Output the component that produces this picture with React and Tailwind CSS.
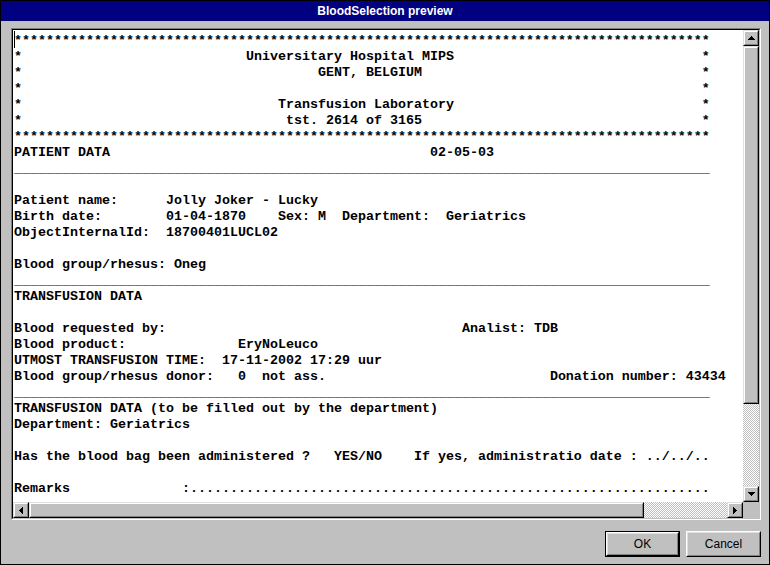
import React from "react";

const W = 87;

// build one fixed-width report line from [column, text] pairs
const line = (...parts) => {
  let s = "";
  for (const [col, txt] of parts) s = s.padEnd(col, " ") + txt;
  return s;
};

const stars = "*".repeat(W);
const rule = "_".repeat(W);

const report = [
  stars,
  line([0, "*"], [29, "Universitary Hospital MIPS"], [86, "*"]),
  line([0, "*"], [38, "GENT, BELGIUM"], [86, "*"]),
  line([0, "*"], [86, "*"]),
  line([0, "*"], [33, "Transfusion Laboratory"], [86, "*"]),
  line([0, "*"], [34, "tst. 2614 of 3165"], [86, "*"]),
  stars,
  line([0, "PATIENT DATA"], [52, "02-05-03"]),
  rule,
  "",
  "Patient name:      Jolly Joker - Lucky",
  "Birth date:        01-04-1870    Sex: M  Department:  Geriatrics",
  "ObjectInternalId:  18700401LUCL02",
  "",
  "Blood group/rhesus: Oneg",
  rule,
  "TRANSFUSION DATA",
  "",
  line([0, "Blood requested by:"], [56, "Analist: TDB"]),
  line([0, "Blood product:"], [28, "EryNoLeuco"]),
  "UTMOST TRANSFUSION TIME:  17-11-2002 17:29 uur",
  line([0, "Blood group/rhesus donor:   0  not ass."], [67, "Donation number: 43434"]),
  rule,
  "TRANSFUSION DATA (to be filled out by the department)",
  "Department: Geriatrics",
  "",
  "Has the blood bag been administered ?   YES/NO    If yes, administratio date : ../../..",
  "",
  line([0, "Remarks"], [21, ":" + ".".repeat(65)]),
];

const Arrow = ({ dir }) => {
  const shapes = {
    up: ["7", "4", "M3 0h1v1h1v1h1v1h1v1H0V3h1V2h1V1h1z"],
    down: ["7", "4", "M0 0h7v1H6v1H5v1H4v1H3V3H2V2H1V1H0z"],
    left: ["4", "7", "M3 0h1v7H3V6H2V5H1V4H0V3h1V2h1V1h1z"],
    right: ["4", "7", "M0 0h1v1h1v1h1v1h1v1H3v1H2v1H1v1H0z"],
  };
  const [w, h, d] = shapes[dir];
  return (
    <svg width={w} height={h} viewBox={`0 0 ${w} ${h}`} shapeRendering="crispEdges">
      <path d={d} fill="#000" />
    </svg>
  );
};

// raised 3D block used for scroll buttons and thumbs
const Raised = ({ className, children }) => (
  <div className={`border border-t-[#dfdfdf] border-l-[#dfdfdf] border-b-black border-r-black ${className}`}>
    <div className="w-full h-full border border-t-white border-l-white border-b-[#808080] border-r-[#808080] bg-[#c0c0c0] flex items-center justify-center">
      {children}
    </div>
  </div>
);

const Track = ({ className }) => (
  <div className={`bg-[image:repeating-conic-gradient(#c0c0c0_0_25%,#ffffff_0_50%)] bg-[length:2px_2px] ${className}`} />
);

const PushButton = ({ label, isDefault }) => {
  const face = (
    <div className="w-full h-full border border-t-white border-l-white border-b-black border-r-black">
      <div className="w-full h-full border border-t-[#dfdfdf] border-l-[#dfdfdf] border-b-[#808080] border-r-[#808080] flex items-center justify-center text-black text-[12px] font-['Liberation_Sans',sans-serif]">
        {label}
      </div>
    </div>
  );
  return isDefault ? (
    <div className="w-[75px] h-[26px] border border-black">{face}</div>
  ) : (
    <div className="w-[75px] h-[26px]">{face}</div>
  );
};

export default function App() {
  return (
    <div className="w-[770px] h-[565px] border border-black bg-[#c0c0c0] flex flex-col">
      <div className="h-[20px] bg-[#000080] flex items-center justify-center text-white font-bold text-[12px] font-['Liberation_Sans',sans-serif]">
        BloodSelection preview
      </div>

      <div className="flex-1 flex flex-col pt-[7px] pl-[10px] pr-[8px] pb-[7px]">
        {/* sunken frame around the preview */}
        <div className="w-[750px] h-[492px] border border-t-[#808080] border-l-[#808080] border-b-white border-r-white">
          <div className="w-full h-full border border-t-black border-l-black border-b-[#c0c0c0] border-r-[#c0c0c0] flex flex-col">
            <div className="flex flex-1 min-h-0">
              <div className="relative flex-1 overflow-hidden bg-white pt-[3px] pl-px text-black font-bold text-[13.333px] leading-4 whitespace-pre font-['Liberation_Mono',monospace]">
                <span className="absolute left-px top-px w-px h-[17px] bg-black" />
                {report.map((l, i) => (
                  <div key={i} className="h-4">{l || " "}</div>
                ))}
              </div>
              <div className="w-[16px] flex flex-col">
                <Raised className="h-[16px]"><Arrow dir="up" /></Raised>
                <Raised className="h-[358px]" />
                <Track className="flex-1" />
                <Raised className="h-[16px]"><Arrow dir="down" /></Raised>
              </div>
            </div>
            <div className="h-[16px] flex">
              <Raised className="w-[16px]"><Arrow dir="left" /></Raised>
              <Raised className="w-[615px]" />
              <Track className="flex-1" />
              <Raised className="w-[16px]"><Arrow dir="right" /></Raised>
              <div className="w-[16px] bg-[#c0c0c0]" />
            </div>
          </div>
        </div>

        <div className="mt-auto flex justify-end gap-[6px]">
          <PushButton label="OK" isDefault />
          <PushButton label="Cancel" />
        </div>
      </div>
    </div>
  );
}
